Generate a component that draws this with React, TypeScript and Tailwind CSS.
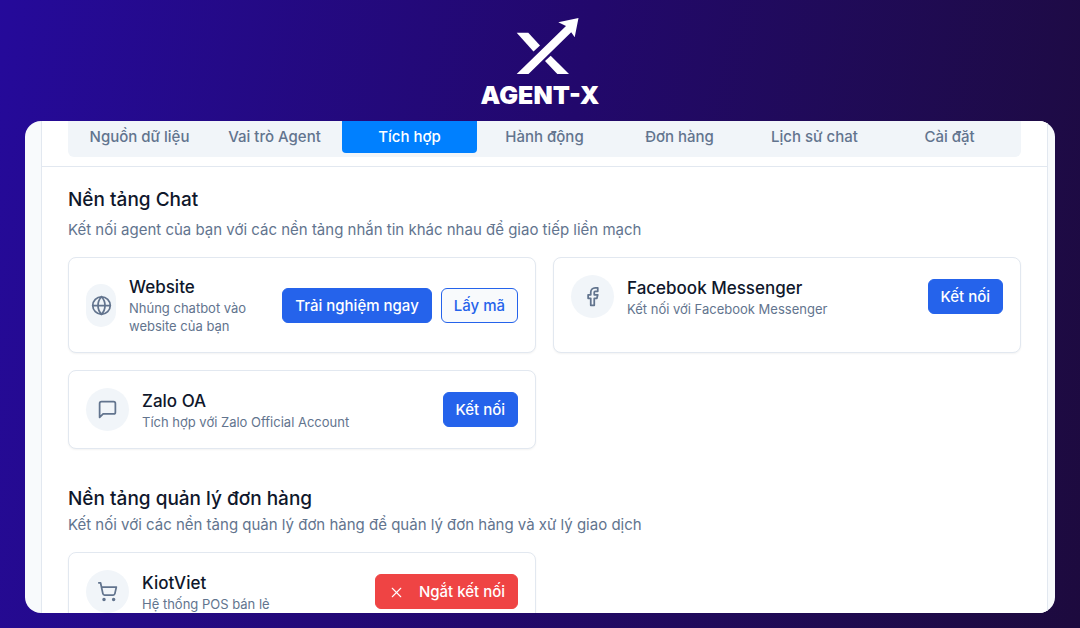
import type { ReactNode } from "react";
import { Facebook, Globe, ShoppingCart, X } from "lucide-react";
import clsx from "clsx";

const TABS = [
  "Nguồn dữ liệu",
  "Vai trò Agent",
  "Tích hợp",
  "Hành động",
  "Đơn hàng",
  "Lịch sử chat",
  "Cài đặt",
];

function Logo() {
  return (
    <div className="flex flex-col items-center text-white">
      <svg
        className="ml-4"
        width="64"
        height="58"
        viewBox="0 0 64 58"
        fill="currentColor"
        aria-hidden="true"
      >
        <path d="M0.7 15.7H12.3L24 28.500L17.500 34.500Z" />
        <path d="M0.7 57L50 9L42.300 5.300L62.500 1L58.700 20.300L55.200 15.300L12.500 57Z" />
        <path d="M29 44L34.700 38.700L53 57H41.300Z" />
      </svg>
      <span className="mt-1 text-[25px] leading-8 font-black">AGENT-X</span>
    </div>
  );
}

function ChatIcon() {
  return (
    <svg
      className="size-[21px]"
      viewBox="0 0 24 24"
      fill="none"
      stroke="currentColor"
      strokeWidth="2"
      strokeLinecap="round"
      strokeLinejoin="round"
      aria-hidden="true"
    >
      <path d="M21 15a2 2 0 0 1-2 2H7l-4 4V5a2 2 0 0 1 2-2h14a2 2 0 0 1 2 2z" />
    </svg>
  );
}

function Button({
  children,
  variant = "primary",
}: {
  children: ReactNode;
  variant?: "primary" | "outline" | "danger";
}) {
  return (
    <button
      type="button"
      className={clsx(
        "flex h-[35px] items-center rounded-md border px-3 pt-0.5 text-[15px] font-medium whitespace-nowrap",
        variant === "primary" && "border-[#2563eb] bg-[#2563eb] text-white",
        variant === "outline" && "border-[#2563eb] bg-slate-50 text-[#2563eb]",
        variant === "danger" && "border-[#ef4444] bg-[#ef4444] text-white",
      )}
    >
      {children}
    </button>
  );
}

function IntegrationCard({
  icon,
  title,
  description,
  compactIcon = false,
  children,
}: {
  icon: ReactNode;
  title: string;
  description: string;
  compactIcon?: boolean;
  children: ReactNode;
}) {
  return (
    <article className="rounded-lg border border-slate-200 bg-white p-[17px] shadow-xs">
      <div className="flex items-center justify-between gap-3">
        <div className="flex min-w-0 items-center gap-[13px]">
          <div
            className={clsx(
              "flex h-[43px] shrink-0 items-center justify-center rounded-full bg-slate-100 text-slate-500",
              compactIcon ? "w-[30px]" : "w-[43px]",
            )}
          >
            {icon}
          </div>
          <div>
            <h3 className="text-[17px] leading-6 font-medium text-slate-900">{title}</h3>
            <p className="text-[13px] leading-[18px] text-slate-500">{description}</p>
          </div>
        </div>
        <div className="flex shrink-0 gap-[9px]">{children}</div>
      </div>
    </article>
  );
}

export default function App() {
  return (
    <div className="flex h-screen flex-col bg-linear-100 from-[#250a9a] via-[#22086c] to-[#1d0a3e] px-[25px] pb-[15px] font-['Inter','Liberation_Sans',sans-serif]">
      <header className="flex h-[121px] shrink-0 justify-center pt-[17px]">
        <Logo />
      </header>

      <main className="min-h-0 flex-1 overflow-hidden rounded-2xl bg-slate-50 pr-[7px] pl-4">
        <div className="min-h-full border-x border-slate-200 bg-white">
          <div className="border-b border-slate-200 px-[26px] pb-[9px]">
            <nav className="grid grid-cols-7 rounded-b-md bg-slate-100 px-1 pb-1">
              {TABS.map((tab) => (
                <button
                  key={tab}
                  type="button"
                  className={clsx(
                    "h-8 rounded-b-sm text-[15px] font-medium",
                    tab === "Tích hợp" ? "bg-[#0080ff] text-white" : "text-slate-500",
                  )}
                >
                  {tab}
                </button>
              ))}
            </nav>
          </div>

          <section className="px-[26px] pt-[19px]">
            <h2 className="text-[19px] leading-7 font-medium text-slate-900">Nền tảng Chat</h2>
            <p className="mt-1 text-[15px] leading-6 text-slate-500">
              Kết nối agent của bạn với các nền tảng nhắn tin khác nhau để giao tiếp liền mạch
            </p>
            <div className="mt-[15px] grid grid-cols-2 gap-[17px]">
              <IntegrationCard
                icon={<Globe className="size-[21px]" />}
                title="Website"
                description="Nhúng chatbot vào website của bạn"
                compactIcon
              >
                <Button>Trải nghiệm ngay</Button>
                <Button variant="outline">Lấy mã</Button>
              </IntegrationCard>
              <IntegrationCard
                icon={<Facebook className="size-[21px]" />}
                title="Facebook Messenger"
                description="Kết nối với Facebook Messenger"
              >
                <Button>Kết nối</Button>
              </IntegrationCard>
              <IntegrationCard
                icon={<ChatIcon />}
                title="Zalo OA"
                description="Tích hợp với Zalo Official Account"
              >
                <Button>Kết nối</Button>
              </IntegrationCard>
            </div>
          </section>

          <section className="px-[26px] pt-9">
            <h2 className="text-[19px] leading-7 font-medium text-slate-900">
              Nền tảng quản lý đơn hàng
            </h2>
            <p className="text-[15px] leading-6 text-slate-500">
              Kết nối với các nền tảng quản lý đơn hàng để quản lý đơn hàng và xử lý giao dịch
            </p>
            <div className="mt-[15px] grid grid-cols-2 gap-[17px]">
              <IntegrationCard
                icon={<ShoppingCart className="size-[21px]" />}
                title="KiotViet"
                description="Hệ thống POS bán lẻ"
              >
                <Button variant="danger">
                  <X className="mr-3.5 size-[17px]" strokeWidth={1.5} />
                  Ngắt kết nối
                </Button>
              </IntegrationCard>
            </div>
          </section>
        </div>
      </main>
    </div>
  );
}
